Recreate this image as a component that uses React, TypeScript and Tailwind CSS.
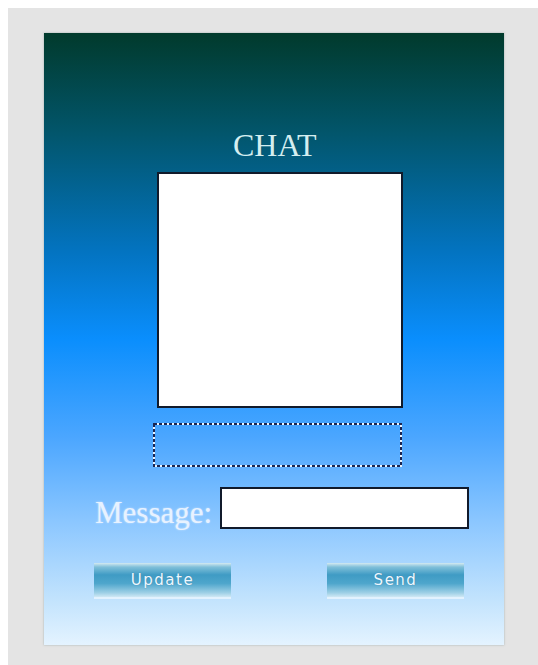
import React from 'react';

const serif = "font-['Liberation_Serif','Times_New_Roman',serif]";
const buttonFace =
  "w-[137px] h-[34px] flex items-center justify-center text-[15px] tracking-[1.5px] text-[#eef8ff] font-['DejaVu_Sans',Verdana,sans-serif] " +
  'bg-[linear-gradient(to_bottom,#d3e9f1_0%,#7fbfd9_12%,#3f9bc4_35%,#4ea6cc_60%,#9fd0e6_88%,#cfe8f4_100%)] ' +
  'shadow-[0_2px_0_rgba(255,255,255,0.55)] [text-shadow:0_0_1px_rgba(40,100,140,0.6)]';

// dashed frame: white line under short navy dashes
function DottedFrame() {
  return (
    <div className="mt-[15px] ml-[109px] w-[249px] h-[44px]">
      <svg width="249" height="44" viewBox="0 0 249 44">
        <rect x="1" y="1" width="247" height="42" fill="none" stroke="#eaf4ff" strokeWidth="2" />
        <rect x="1" y="1" width="247" height="42" fill="none" stroke="#1b2550" strokeWidth="2" strokeDasharray="3 2" />
      </svg>
    </div>
  );
}

export default function App() {
  return (
    <div className="w-[538px] h-[665px] bg-white pt-2 pl-2">
      <div className="h-full bg-[#e4e4e4] pl-[36px] pt-[25px]">
        {/* chat panel */}
        <div className="w-[460px] h-[612px] flex flex-col items-start shadow-[0_0_2px_rgba(120,140,140,0.6)] bg-[linear-gradient(to_bottom,#013a2c_0%,#02556a_16%,#0374c2_36%,#0a8efd_50%,#4ba6ff_66%,#8cc7ff_80%,#c4e4fd_93%,#e4f3ff_100%)]">
          <h1 className={`${serif} mt-[96px] ml-[189px] text-[32px] leading-[32px] text-[#d4eef0]`}>
            CHAT
          </h1>

          <div className="mt-[11px] ml-[113px] w-[246px] h-[236px] bg-white border-2 border-[#111a2b]" />

          <DottedFrame />

          <div className="mt-[20px] flex items-start">
            <label className={`${serif} ml-[51px] mt-[10px] w-[125px] text-[31px] leading-[31px] text-[#e8f2ff] [text-shadow:0_0_2px_rgba(255,255,255,0.6)]`}>
              Message:
            </label>
            <input className="w-[249px] h-[42px] bg-white border-2 border-[#111a2b] outline-none" />
          </div>

          <div className="mt-[34px] ml-[50px] flex gap-[96px]">
            <button className={buttonFace}>Update</button>
            <button className={buttonFace}>Send</button>
          </div>
        </div>
      </div>
    </div>
  );
}
